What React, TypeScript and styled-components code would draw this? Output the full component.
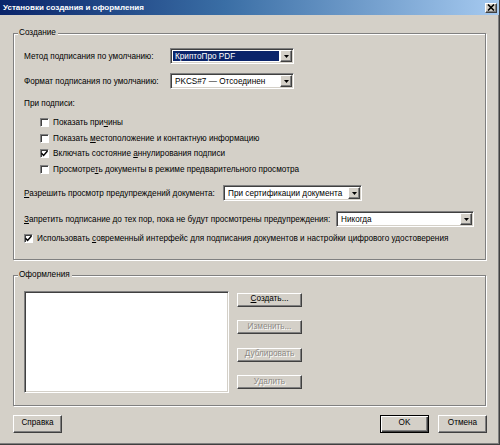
import React from "react";
import styled, { createGlobalStyle, css } from "styled-components";

const GlobalStyle = createGlobalStyle`
    html, body {
        margin: 0;
        padding: 0;
        background: #d4d0c8;
    }
    * { box-sizing: border-box; }
`;

const raised = css`
    border: 1px solid;
    border-color: #ffffff #404040 #404040 #ffffff;
    box-shadow: inset -1px -1px 0 #808080;
`;

const sunken = css`
    border: 1px solid;
    border-color: #808080 #ffffff #ffffff #808080;
    box-shadow: inset 1px 1px 0 #404040, inset -1px -1px 0 #d4d0c8;
`;

export default function App() {
    return (
        <>
            <GlobalStyle />
            <Window>
                <TitleBar>
                    <Title>Установки создания и оформления</Title>
                    <CloseButton>
                        <svg width="8" height="7" viewBox="0 0 8 7">
                            <path d="M1 0.5 L7 6.5 M7 0.5 L1 6.5" stroke="#000" strokeWidth="1.6" />
                        </svg>
                    </CloseButton>
                </TitleBar>
                <Body>
                    <Group>
                        <Legend>Создание</Legend>
                        <FieldRow $mt={9}>
                            <Label $width={146}>Метод подписания по умолчанию:</Label>
                            <Select value="КриптоПро PDF" width={124} selected />
                        </FieldRow>
                        <FieldRow $mt={9}>
                            <Label $width={146}>Формат подписания по умолчанию:</Label>
                            <Select value="PKCS#7 — Отсоединен" width={124} />
                        </FieldRow>
                        <Caption>При подписи:</Caption>
                        <CheckList>
                            <Check checked={false}>Показать при<u>ч</u>ины</Check>
                            <Check checked={false}>Показать <u>м</u>естоположение и контактную информацию</Check>
                            <Check checked>Включать состояние <u>а</u>ннулирования подписи</Check>
                            <Check checked={false}>Просмотре<u>т</u>ь документы в режиме предварительного просмотра</Check>
                        </CheckList>
                        <FieldRow $mt={8}>
                            <Label $width={199}><u>Р</u>азрешить просмотр предупреждений документа:</Label>
                            <Select value="При сертификации документа" width={139} />
                        </FieldRow>
                        <FieldRow $mt={10}>
                            <Label $width={312}><u>З</u>апретить подписание до тех пор, пока не будут просмотрены предупреждения:</Label>
                            <Select value="Никогда" width={138} />
                        </FieldRow>
                        <TopCheck>
                            <Check checked>Использовать <u>с</u>овременный интерфейс для подписания документов и настройки цифрового удостоверения</Check>
                        </TopCheck>
                    </Group>
                    <Group $mt={15}>
                        <Legend>Оформления</Legend>
                        <DesignArea>
                            <ListBox />
                            <ButtonColumn>
                                <Button $width={65} $height={14}><u>С</u>оздать...</Button>
                                <Button $width={65} $height={14} disabled>Изменить...</Button>
                                <Button $width={65} $height={14} disabled>Дублировать</Button>
                                <Button $width={65} $height={14} disabled>Удалить</Button>
                            </ButtonColumn>
                        </DesignArea>
                    </Group>
                    <Footer>
                        <Button $width={49} $height={18}>Справка</Button>
                        <FooterRight>
                            <Button $width={49} $height={18} $default>OK</Button>
                            <Button $width={49} $height={18}>Отмена</Button>
                        </FooterRight>
                    </Footer>
                </Body>
            </Window>
        </>
    );
}

function Select({ value, width, selected }: { value: string; width: number; selected?: boolean }) {
    return (
        <SelectBox $width={width}>
            <SelectValue $selected={!!selected}>{value}</SelectValue>
            <DropButton>
                <svg width="5" height="3" viewBox="0 0 5 3">
                    <path d="M0 0 H5 L2.5 3 Z" fill="#000" />
                </svg>
            </DropButton>
        </SelectBox>
    );
}

function Check({ checked, children }: { checked: boolean; children: React.ReactNode }) {
    return (
        <CheckRow>
            <Box>
                {checked && (
                    <svg width="7" height="7" viewBox="0 0 7 7">
                        <path d="M0.5 3.2 L2.6 5.4 L6.5 1" stroke="#000" strokeWidth="1.5" fill="none" />
                    </svg>
                )}
            </Box>
            <CheckText>{children}</CheckText>
        </CheckRow>
    );
}

const Window = styled.div`
    width: 500px;
    height: 445px;
    background: #d4d0c8;
    display: flex;
    flex-direction: column;
    font-family: "Liberation Sans", Arial, sans-serif;
    font-size: 8.2px;
    color: #000;
    border-right: 1px solid #404040;
    border-bottom: 1px solid #404040;
    box-shadow: inset -1px -1px 0 #808080;
    overflow: hidden;
    u { text-decoration: underline; text-underline-offset: 1px; }
`;

const TitleBar = styled.div`
    height: 15px;
    display: flex;
    align-items: center;
    justify-content: space-between;
    padding: 0 2px 0 3px;
    background: linear-gradient(90deg, #0a246a 0%, #3a6ea5 45%, #a6caf0 100%);
`;

const Title = styled.span`
    color: #fff;
    font-weight: bold;
    font-size: 8px;
    line-height: 15px;
`;

const CloseButton = styled.div`
    width: 12px;
    height: 10px;
    ${raised};
    background: #d4d0c8;
    display: flex;
    align-items: center;
    justify-content: center;
`;

const Body = styled.div`
    flex: 1;
    display: flex;
    flex-direction: column;
    padding: 18px 12px 0 13px;
`;

const Group = styled.div<{ $mt?: number }>`
    margin-top: ${p => p.$mt ?? 0}px;
    border: 1px solid #808080;
    box-shadow: 1px 1px 0 #ffffff, inset 1px 1px 0 #ffffff;
    padding: 0 10px 12px 10px;
    margin-right: 1px;
`;

const Legend = styled.div`
    width: fit-content;
    height: 12px;
    line-height: 12px;
    margin: -7px 0 0 -6px;
    padding: 0 2px 0 1px;
    background: #d4d0c8;
`;

const FieldRow = styled.div<{ $mt: number }>`
    display: flex;
    align-items: center;
    height: 16px;
    margin-top: ${p => p.$mt}px;
`;

const Label = styled.span<{ $width: number }>`
    width: ${p => p.$width}px;
    flex-shrink: 0;
    white-space: nowrap;
`;

const SelectBox = styled.div<{ $width: number }>`
    width: ${p => p.$width}px;
    height: 16px;
    ${sunken};
    background: #fff;
    display: flex;
    padding: 2px;
`;

const SelectValue = styled.span<{ $selected: boolean }>`
    flex: 1;
    display: flex;
    align-items: center;
    padding-left: 2px;
    white-space: nowrap;
    overflow: hidden;
    background: ${p => (p.$selected ? "#0a246a" : "transparent")};
    color: ${p => (p.$selected ? "#fff" : "#000")};
`;

const DropButton = styled.span`
    width: 12px;
    ${raised};
    background: #d4d0c8;
    display: flex;
    align-items: center;
    justify-content: center;
    margin: -1px -1px -1px 1px;
`;

const Caption = styled.div`
    height: 12px;
    line-height: 12px;
    margin-top: 9px;
`;

const CheckList = styled.div`
    display: flex;
    flex-direction: column;
    padding-left: 16px;
    margin-top: 5px;
`;

const CheckRow = styled.div`
    display: flex;
    align-items: center;
    height: 15.5px;
    gap: 4px;
    white-space: nowrap;
`;

const Box = styled.span`
    width: 9px;
    height: 9px;
    flex-shrink: 0;
    border: 1px solid;
    border-color: #808080 #ffffff #ffffff #808080;
    box-shadow: inset 1px 1px 0 #404040;
    background: #fff;
    display: flex;
    align-items: center;
    justify-content: center;
`;

const CheckText = styled.span``;

const TopCheck = styled.div`
    margin-top: 4px;
`;

const DesignArea = styled.div`
    display: flex;
    gap: 8px;
    margin-top: 10px;
`;

const ListBox = styled.div`
    width: 205px;
    height: 102px;
    ${sunken};
    background: #fff;
`;

const ButtonColumn = styled.div`
    display: flex;
    flex-direction: column;
    gap: 13.5px;
    padding-top: 2px;
`;

const Button = styled.button<{ $width: number; $height: number; $default?: boolean }>`
    width: ${p => p.$width}px;
    height: ${p => p.$height}px;
    padding: 0;
    font-family: inherit;
    font-size: 8.2px;
    line-height: 1;
    background: #d4d0c8;
    color: #000;
    ${raised};
    ${p =>
        p.$default &&
        css`
            border: 1px solid #000;
            box-shadow: inset 1px 1px 0 #fff, inset -1px -1px 0 #404040, inset -2px -2px 0 #808080;
        `}
    &:disabled {
        color: #8c8984;
        text-shadow: 1px 1px 0 #fff;
    }
`;

const Footer = styled.div`
    display: flex;
    justify-content: space-between;
    margin-top: 9px;
`;

const FooterRight = styled.div`
    display: flex;
    gap: 9px;
`;
